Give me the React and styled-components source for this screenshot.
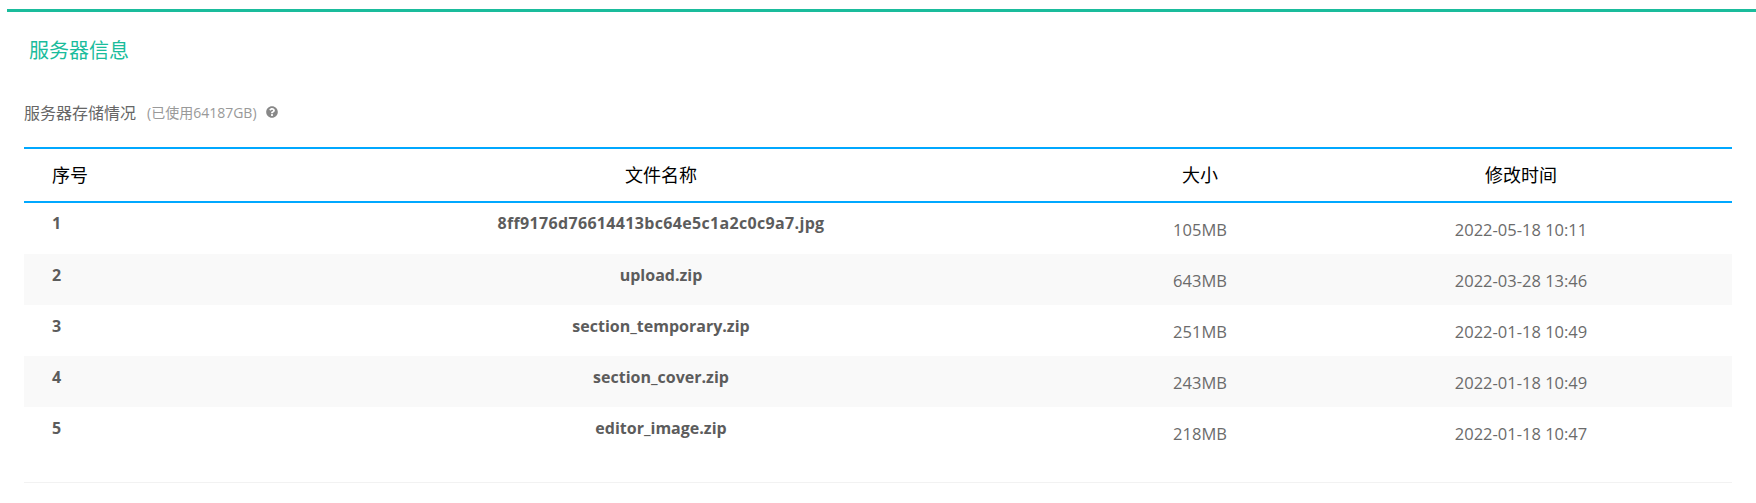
import styled, { createGlobalStyle } from "styled-components";
import { FaQuestionCircle } from "react-icons/fa";

const files = [
    { id: 1, name: "8ff9176d76614413bc64e5c1a2c0c9a7.jpg", size: "105MB", time: "2022-05-18 10:11" },
    { id: 2, name: "upload.zip", size: "643MB", time: "2022-03-28 13:46" },
    { id: 3, name: "section_temporary.zip", size: "251MB", time: "2022-01-18 10:49" },
    { id: 4, name: "section_cover.zip", size: "243MB", time: "2022-01-18 10:49" },
    { id: 5, name: "editor_image.zip", size: "218MB", time: "2022-01-18 10:47" },
];

const GlobalStyle = createGlobalStyle`
    body {
        margin: 0;
        background: #fff;
        font-family: "Open Sans", "Noto Sans CJK SC", sans-serif;
    }
`;

const Page = styled.div`
    height: 503px;
    padding: 9px 0 0 7px;
    box-sizing: border-box;
    overflow: hidden;
`;

const Panel = styled.section`
    border-top: 3px solid #1abc9c;
    padding: 0 24px 0 17px;
`;

const Title = styled.h2`
    margin: 0;
    padding: 24px 0 0 5px;
    height: 42px;
    font-size: 20px;
    line-height: 30px;
    font-weight: 400;
    color: #1abc9c;
`;

const Summary = styled.div`
    display: flex;
    align-items: center;
    margin-top: 22px;
    height: 24px;
    font-size: 16px;
    color: #666;
`;

const Hint = styled.span`
    margin-left: 11px;
    font-size: 14px;
    color: #999;
`;

const HelpIcon = styled(FaQuestionCircle)`
    margin-left: 9px;
    width: 12px;
    height: 12px;
    color: #888;
`;

const Table = styled.table`
    width: 100%;
    margin-top: 23px;
    table-layout: fixed;
    border-collapse: collapse;
    border-bottom: 1px solid #f2f2f2;
`;

const HeadRow = styled.tr`
    border-top: 2px solid #00a8ff;
    border-bottom: 2px solid #00a8ff;
`;

const Th = styled.th`
    height: 50px;
    padding: 0 0 2px;
    padding-left: ${(p) => (p.$left ? "28px" : "0")};
    font-size: 18px;
    font-weight: 400;
    color: #000;
    text-align: ${(p) => (p.$left ? "left" : "center")};
`;

const NameCell = styled.td`
    padding: 10px 0 0;
    padding-left: ${(p) => (p.$left ? "28px" : "0")};
    vertical-align: top;
    font-size: 16px;
    line-height: 22px;
    font-weight: 700;
    color: #5c5c5c;
    text-align: ${(p) => (p.$left ? "left" : "center")};
`;

const Cell = styled.td`
    padding: 1px 0 0;
    vertical-align: middle;
    font-size: 16.5px;
    color: #6b6b6b;
    text-align: center;
`;

const Row = styled.tr`
    height: 51px;
    background: ${(p) => (p.$even ? "#f9f9f9" : "#fff")};

    &:first-child {
        height: 52px;

        ${NameCell} {
            padding-top: 9px;
            letter-spacing: 0.33px;
        }
    }
`;

const Spacer = styled.tr`
    height: 24px;
`;

export default function App() {
    return (
        <Page>
            <GlobalStyle />
            <Panel>
                <Title>服务器信息</Title>
                <Summary>
                    服务器存储情况
                    <Hint>(已使用64187GB)</Hint>
                    <HelpIcon />
                </Summary>
                <Table>
                    <colgroup>
                        <col style={{ width: 208 }} />
                        <col style={{ width: 858 }} />
                        <col style={{ width: 220 }} />
                        <col />
                    </colgroup>
                    <thead>
                        <HeadRow>
                            <Th $left>序号</Th>
                            <Th>文件名称</Th>
                            <Th>大小</Th>
                            <Th>修改时间</Th>
                        </HeadRow>
                    </thead>
                    <tbody>
                        {files.map((file) => (
                            <Row key={file.id} $even={file.id % 2 === 0}>
                                <NameCell $left>{file.id}</NameCell>
                                <NameCell>{file.name}</NameCell>
                                <Cell>{file.size}</Cell>
                                <Cell>{file.time}</Cell>
                            </Row>
                        ))}
                        <Spacer />
                    </tbody>
                </Table>
            </Panel>
        </Page>
    );
}
